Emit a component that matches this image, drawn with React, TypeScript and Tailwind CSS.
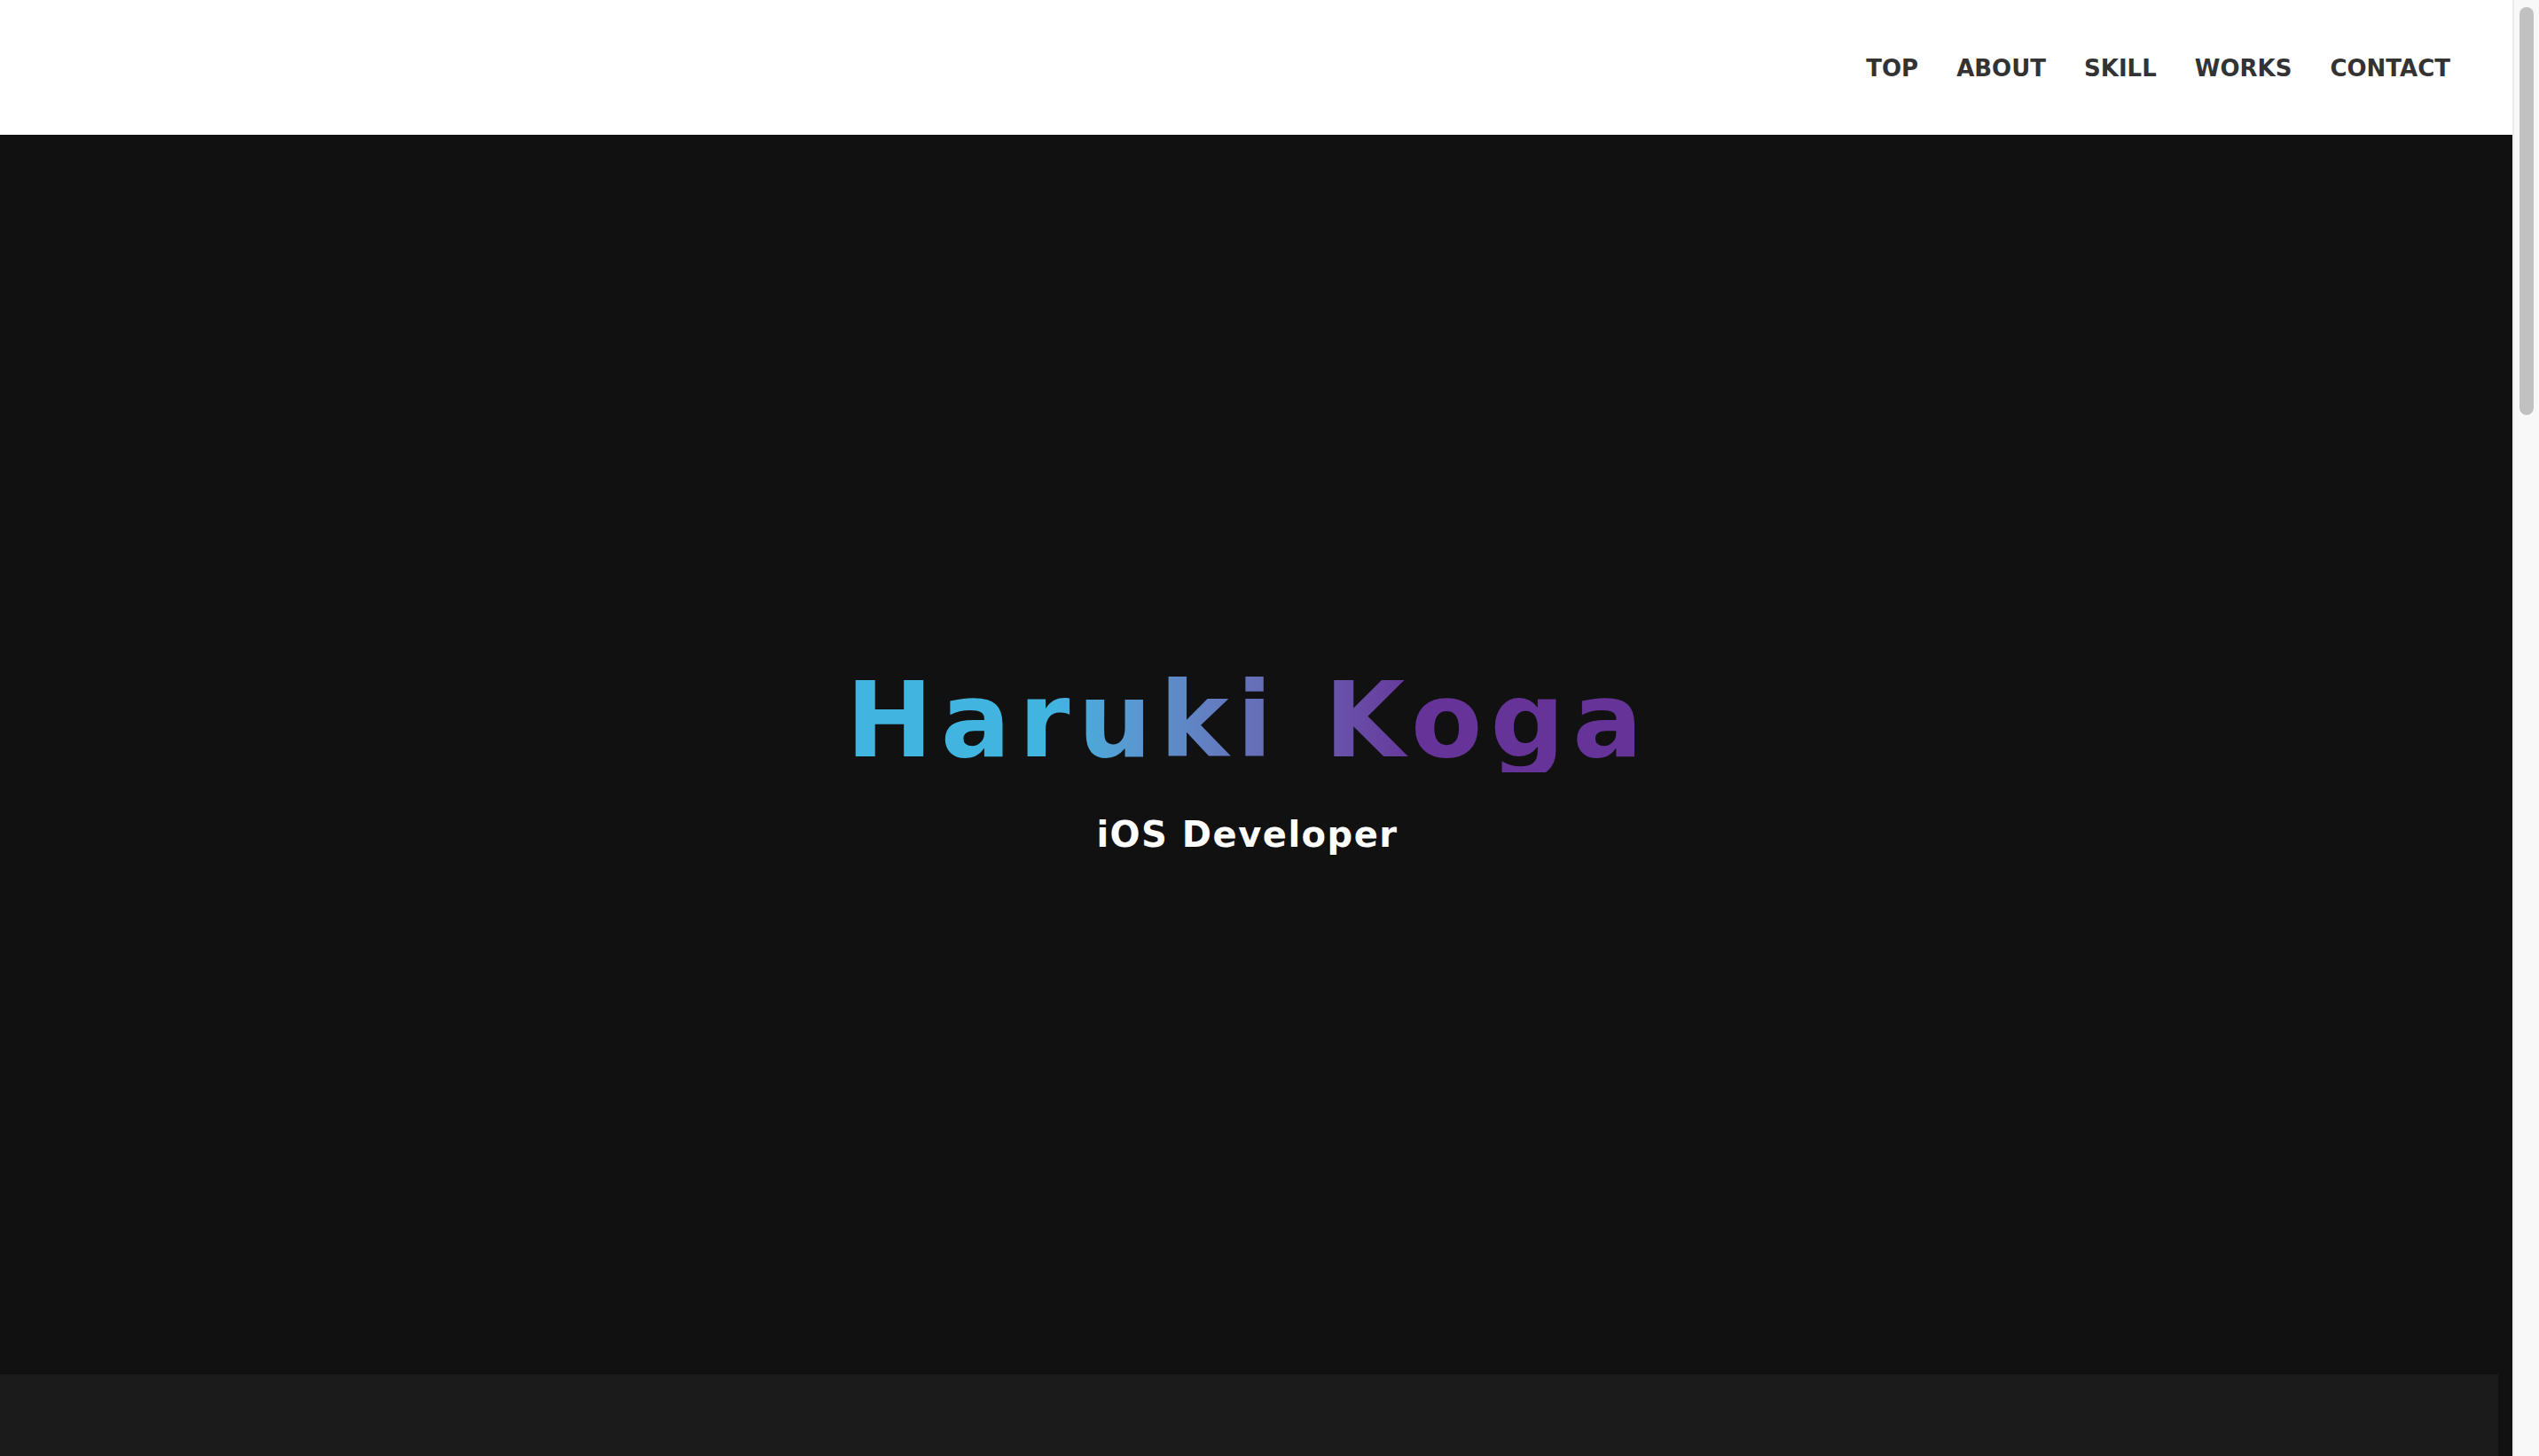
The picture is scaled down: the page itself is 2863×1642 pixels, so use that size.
const navItems = ["TOP", "ABOUT", "SKILL", "WORKS", "CONTACT"];

function Header() {
  return (
    <header className="h-[152px] shrink-0 bg-white flex items-center justify-end pr-[70px]">
      <nav className="flex items-center gap-[43px]">
        {navItems.map((item) => (
          <a
            key={item}
            href={`#${item.toLowerCase()}`}
            className="text-[26px] leading-none font-bold text-[#333333] mt-[2px]"
          >
            {item}
          </a>
        ))}
      </nav>
    </header>
  );
}

function Hero() {
  return (
    <section className="h-[1398px] shrink-0 bg-[#111111] flex flex-col items-center justify-center pt-[12px]">
      <h1 className="inline-block pr-[18px] text-[117px] leading-none font-bold tracking-[9px] bg-linear-to-r from-[#41b4e0] from-25% to-[#663399] to-70% bg-clip-text text-transparent">
        Haruki Koga
      </h1>
      <p className="mt-[50px] pr-[20px] text-[40px] leading-none font-bold tracking-[1.5px] text-white">
        iOS Developer
      </p>
    </section>
  );
}

function Scrollbar() {
  return (
    <div className="w-[30px] shrink-0 h-full bg-[#f8f8f8] border-l-[2px] border-[#ececec] pl-[6px] pt-[8px]">
      <div className="w-[16px] h-[460px] rounded-full bg-[#c1c1c1]" />
    </div>
  );
}

export default function App() {
  return (
    <div
      className="h-[1642px] w-full flex overflow-hidden bg-[#111111]"
      style={{ fontFamily: '"DejaVu Sans", "Noto Sans", sans-serif' }}
    >
      <main className="flex-1 flex flex-col min-w-0">
        <Header />
        <Hero />
        <div className="flex-1 mr-[16px] bg-[#1b1b1b]" />
      </main>
      <Scrollbar />
    </div>
  );
}
